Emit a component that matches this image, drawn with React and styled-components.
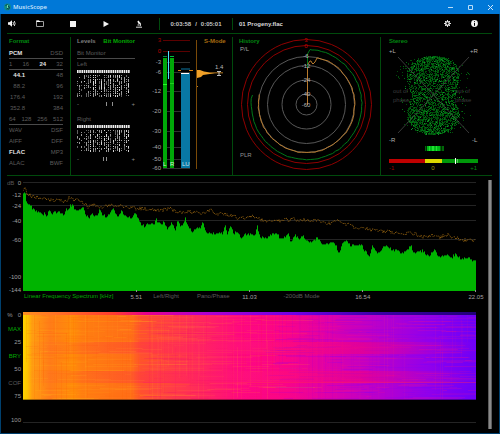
import React from "react";
import styled, { createGlobalStyle } from "styled-components";

const GlobalStyle = createGlobalStyle`
  * { box-sizing: border-box; }
  html, body { margin: 0; background: #000; }
  body { font: 6px/8px "Liberation Sans", Arial, sans-serif; color: #8a8a8a; }
  svg { display: block; }
  svg text { font-family: "Liberation Sans", Arial, sans-serif; font-size: 6px; }
`;

const GREEN = "#00a800";
const RULE = "#004a0c";

/* ---------- data ---------- */

function makeRandom(seed) {
  let s = seed;
  return () => {
    s = (s * 1664525 + 1013904223) % 4294967296;
    return s / 4294967296;
  };
}

function sampleAt(points, x) {
  for (let i = 1; i < points.length; i++) {
    if (x <= points[i][0]) {
      const [x0, y0] = points[i - 1];
      const [x1, y1] = points[i];
      return y0 + ((y1 - y0) * (x - x0)) / (x1 - x0);
    }
  }
  return points[points.length - 1][1];
}

const LEVEL = [
  [0, 60], [5, 52], [9, 85], [17, 90], [27, 103], [37, 110], [44, 118], [50, 112], [57, 122], [64, 118],
  [70, 128], [77, 112], [87, 118], [102, 115], [112, 118], [122, 122], [129, 108], [137, 108], [142, 93],
  [150, 98], [157, 112], [167, 108], [175, 102], [180, 103], [187, 122], [197, 133], [202, 122], [212, 125],
  [222, 125], [230, 105], [237, 122], [247, 130], [257, 122], [270, 106], [282, 130], [295, 113], [302, 125],
  [317, 130], [327, 130], [335, 116], [344, 135], [352, 150], [364, 158], [372, 148], [382, 150], [392, 152],
  [399, 136], [407, 150], [417, 150], [422, 143], [432, 165], [444, 146], [457, 168], [464, 138], [472, 160],
  [480, 150], [486, 132], [494, 158], [507, 175], [522, 165], [532, 160], [538, 146], [547, 175], [562, 178],
  [577, 182], [587, 175], [597, 180], [605, 153], [612, 180], [622, 158], [632, 182], [640, 172], [652, 192],
  [667, 182], [682, 183], [695, 182], [702, 158], [710, 192], [722, 190], [734, 192], [742, 182], [760, 178],
  [772, 195], [782, 192], [795, 177], [802, 210], [814, 182], [827, 195], [840, 190], [850, 200], [862, 205],
  [882, 192], [897, 212], [917, 208], [937, 212], [946, 238], [957, 212], [967, 200], [982, 215], [1012, 212],
  [1027, 235], [1039, 248], [1048, 214], [1062, 238], [1077, 225], [1089, 214], [1107, 230], [1117, 228],
  [1132, 240], [1147, 235], [1162, 213], [1170, 240], [1197, 232], [1217, 250], [1234, 223], [1244, 250],
  [1272, 245], [1282, 255], [1297, 240], [1312, 258], [1332, 250], [1347, 262], [1359, 258],
].map(([x, y]) => [x / 3, y / 3 - 2]);

const PEAK = [
  [0, 55], [5, 44], [14, 60], [32, 68], [52, 72], [77, 78], [102, 77], [127, 82], [143, 68], [154, 78],
  [177, 82], [194, 98], [207, 92], [222, 97], [252, 98], [272, 93], [307, 97], [332, 103], [362, 103],
  [380, 108], [397, 109], [417, 108], [442, 105], [462, 115], [492, 112], [532, 118], [564, 107], [582, 120],
  [622, 122], [647, 133], [682, 130], [697, 128], [717, 138], [742, 142], [772, 140], [812, 135], [852, 138],
  [882, 140], [922, 150], [944, 136], [962, 150], [982, 148], [1002, 168], [1022, 160], [1037, 165],
  [1057, 172], [1102, 172], [1132, 178], [1172, 178], [1207, 190], [1232, 182], [1252, 190], [1272, 182],
  [1302, 192], [1322, 200], [1342, 196], [1359, 202],
].map(([x, y]) => [x / 3, y / 3 - 2]);

const rnd = makeRandom(42);

let levelPath = "M0 115";
let levelEdge = "";
let peakPath = "";
for (let x = 0; x < 453; x++) {
  const y = Math.round(sampleAt(LEVEL, x) + (rnd() - 0.4) * 2.6);
  levelPath += `V${y}H${x + 1}`;
  levelEdge += `M${x} ${y - 1}h1v2h-1z`;
  const p = (sampleAt(PEAK, x) + (rnd() - 0.5) * 4).toFixed(1);
  peakPath += `${x ? "L" : "M"}${x} ${p}`;
}
levelPath += "V115Z";

function bitDots(seed) {
  const r = makeRandom(seed);
  const dots = ["", "", ""];
  for (let c = 0; c < 24; c++) {
    const density = c < 4 ? 0.4 : 0.6 + r() * 0.4;
    const tone = r();
    for (let row = 0; row < 11; row++) {
      if (r() < density) {
        const shade = Math.floor((tone * 0.6 + r() * 0.4) * 3);
        dots[shade] += `M${Math.round(c * 2.22)} ${5 + row * 2}h1v${r() < 0.5 ? 2 : 1}h-1z`;
      }
    }
  }
  return dots;
}

const stereoDots = (() => {
  const r = makeRandom(9);
  const dots = ["", "", ""];
  for (let i = 0; i < 4300; i++) {
    const y = 22 + r() * 78;
    const t = Math.abs(y - 61) / 39;
    const half = t > 0.5 ? 29 * Math.sqrt(Math.max(0, 1 - ((t - 0.5) / 0.51) ** 2)) : 24 + 10 * t;
    const u = r() * 2 - 1;
    const spread = r() < 0.9 ? u * 0.92 : u * 1.3;
    const keep = t < 0.35 ? 0.6 : 0.85;
    if (r() < keep) {
      dots[Math.floor(r() * r() * 2.7)] += `M${Math.round(54 + spread * half)} ${Math.round(y)}h1v1h-1z`;
    }
  }
  return dots;
})();

const streaks = (() => {
  const r = makeRandom(77);
  const list = [];
  for (let i = 0; i < 640; i++) {
    const w = 4 + r() * 60;
    const x = r() * 453;
    const tone = x < 120 ? ["#ffb818", "#ff6a10"] : x < 240 ? ["#ff6a40", "#f0106a"] : ["#ff1080", "#7a00ff"];
    list.push({ x: Math.min(x, 453 - w), y: 3 + Math.floor(r() * 84), w, h: 1, c: tone[r() < 0.5 ? 0 : 1], o: 0.06 + r() * 0.16 });
  }
  for (let i = 0; i < 170; i++) {
    const x = Math.floor(r() * 453);
    const top = r() < 0.5 ? 3 : 3 + Math.floor(r() * 50);
    const tone = x < 120 ? ["#ffb020", "#ff6000"] : x < 250 ? ["#ff8a30", "#ff1060"] : ["#ff3070", "#9a00e0"];
    const strength = x < 250 ? 0.16 : 0.07;
    list.push({ x, y: top, w: 1, h: Math.min(87 - top, 20 + r() * 80), c: tone[r() < 0.5 ? 0 : 1], o: 0.04 + r() * strength });
  }
  return list;
})();

function ringTrace(radius, start, end, wobble, seed) {
  const r = makeRandom(seed);
  let d = "";
  for (let a = start; a <= end; a += 4) {
    const rad = (a * Math.PI) / 180;
    const q = radius + (r() - 0.5) * wobble;
    d += `${d ? "L" : "M"}${(73.5 + q * Math.sin(rad)).toFixed(1)} ${(70.5 - q * Math.cos(rad)).toFixed(1)}`;
  }
  return d;
}

/* ---------- styled parts ---------- */

const Window = styled.div`
  display: flex;
  flex-direction: column;
  min-height: 100vh;
  background: #000;
  border: 1px solid #00406e;
  border-top: 0;
`;

const TitleBar = styled.header`
  display: flex;
  align-items: center;
  height: 14px;
  margin: 0 -1px;
  padding-left: 4px;
  background: #0078d7;
`;

const Title = styled.h1`
  flex: 1;
  margin: 0 0 0 2px;
  font: 600 6px/8px "Open Sans", "Noto Sans", sans-serif;
  color: #cfe6fb;
`;

const IconButton = styled.button`
  display: flex;
  align-items: center;
  justify-content: center;
  flex: none;
  width: ${(p) => p.$w}px;
  height: 14px;
  padding: 0;
  border: 0;
  background: none;
  color: ${(p) => p.$color || "#f4f4f4"};
`;

const Toolbar = styled.nav`
  display: flex;
  align-items: center;
  height: 19px;
  padding-right: 11px;
`;

const Times = styled.div`
  display: flex;
  justify-content: center;
  gap: 4px;
  width: 74px;
  margin-left: 4px;
  border: solid ${RULE};
  border-width: 0 1px;
  line-height: 12px;
  font-weight: 700;
  color: #c4c4c4;
`;

const Track = styled.div`
  flex: 1;
  padding-left: 6px;
  font-weight: 700;
  color: #d8d8d8;
`;

const Content = styled.main`
  display: flex;
  flex: 1;
  flex-direction: column;
  margin: 0 7px 0 6px;
  border-top: 1px solid ${RULE};
`;

const Panels = styled.div`
  display: grid;
  grid-template-columns: 64fr 162fr 148fr 111fr;
  height: 141px;
  padding: 3px 0;
`;

const Panel = styled.section`
  display: ${(p) => (p.$split ? "flex" : "block")};
  min-width: 0;
  border-right: ${(p) => (p.$last ? 0 : 1)}px solid ${RULE};
`;

const Overlay = styled.div`
  display: grid;
  > * { grid-area: 1 / 1; }
`;

const Heading = styled.h2`
  margin: 0;
  padding: 0 0 3px ${(p) => p.$indent}px;
  font: 700 6px/8px "Liberation Sans", Arial, sans-serif;
  color: #008a10;
`;

const FormatList = styled.div`
  margin: 0 7px 0 2px;
`;

const FormatRow = styled.div`
  display: flex;
  justify-content: space-between;
  height: 11px;
  line-height: 10px;
  border-bottom: ${(p) => (p.$rule ? "1px solid #4a4a4a" : "1px solid transparent")};
`;

const FormatItem = styled.span`
  min-width: ${(p) => (p.$rate ? 16 : 0)}px;
  text-align: right;
  color: ${(p) => (p.$on ? "#e0e0e0" : "#5c5c5c")};
  font-weight: ${(p) => (p.$on ? 700 : 400)};
`;

const LevelColumn = styled.div`
  display: flex;
  flex-direction: column;
  flex: none;
  width: 77px;
  padding: 0 13px 0 6px;
`;

const Tabs = styled.div`
  display: flex;
  justify-content: space-between;
  align-items: flex-start;
  height: 11px;
`;

const TextButton = styled.button`
  padding: 0;
  border: 0;
  background: none;
  font: ${(p) => (p.$bold ? 700 : 400)} 6px/8px "Liberation Sans", Arial, sans-serif;
  color: ${(p) => p.$color};
  white-space: nowrap;
`;

const Caption = styled.div`
  height: 11px;
  line-height: 10px;
  color: #5c5c5c;
  border-bottom: 1px solid ${(p) => (p.$rule ? "#4a4a4a" : "transparent")};
`;

const Channel = styled.div`
  height: 55px;
`;

const Balance = styled.div`
  display: flex;
  justify-content: space-between;
  align-items: center;
  margin-top: 2px;
`;

const SMode = styled.div`
  padding-left: 56px;
`;

const Analysis = styled.div`
  display: flex;
  flex: 1;
  justify-content: space-between;
  gap: 12px;
  border-top: 1px solid ${RULE};
`;

const Charts = styled.div`
  flex: 1;
  min-width: 0;
`;

const Scrollbar = styled.div`
  width: 4px;
  margin: 4px 0;
  background: #8a8a8a;
  border: solid #5c5c5c;
  border-width: 0 1px;
`;

const ChartRow = styled.section`
  display: grid;
  grid-template-columns: 16px 1fr;
`;

const FrequencyAxis = styled.div`
  display: grid;
  grid-template-columns: repeat(4, minmax(0, 1fr));
  grid-column: 2;
  height: 20px;
`;

const AxisCell = styled.div`
  display: flex;
  height: 8px;
  padding-left: ${(p) => p.$indent}px;
  button + button { margin-left: 18px; }
`;

const Tick = styled.span`
  flex: none;
  width: 20px;
  margin: 1px -10px 0 auto;
  text-align: center;
  color: #a0a0a0;
`;

const PercentAxis = styled.div`
  display: flex;
  flex-direction: column;
  justify-content: space-between;
  align-items: flex-end;
  height: 87px;
  padding-right: 2px;
`;

const PercentLabel = styled.span`
  display: flex;
  gap: 5px;
  line-height: 6px;
  color: #9a9a9a;
`;

const Footer = styled.div`
  display: flex;
  align-items: center;
  justify-content: flex-end;
  grid-column: 1;
  height: 8px;
  margin-top: 16px;
  padding-right: 2px;
  color: #9a9a9a;
`;

const FooterRule = styled.div`
  height: 1px;
  margin-top: 22px;
  background: #242424;
`;

/* ---------- drawings ---------- */

const Stretch = ({ w, h, label, children }) => (
  <svg width="100%" height={h} viewBox={`0 0 ${w} ${h}`} preserveAspectRatio="none" role="img" aria-label={label}>
    {children}
  </svg>
);

function BitGrid({ seed }) {
  const dots = bitDots(seed);
  return (
    <svg width="58" height="28" viewBox="0 0 58 28" role="img" aria-label="Bit activity">
      {Array.from({ length: 24 }, (_, i) => (
        <rect key={i} x={i * 2.22} y="0" width="1.600" height="3" fill="#f0f0f0" />
      ))}
      <path d={dots[0]} fill="#606060" />
      <path d={dots[1]} fill="#989898" />
      <path d={dots[2]} fill="#d4d4d4" />
    </svg>
  );
}

function BitChannel({ name, seed, marks }) {
  return (
    <Channel>
      <Caption>{name}</Caption>
      <BitGrid seed={seed} />
      <Balance>
        <span>-</span>
        <svg width="50" height="6" viewBox="0 0 50 6" aria-hidden="true">
          {marks.map((x) => (
            <rect key={x} x={x} y="1" width="1" height="4" fill="#909090" />
          ))}
        </svg>
        <span>+</span>
      </Balance>
    </Channel>
  );
}

function Meters() {
  const marks = [["3", 6, "#a00000"], ["0", 17, "#c00000"], ["-3", 28], ["-6", 38], ["-12", 57], ["-20", 77], ["-30", 97], ["-40", 113], ["-50", 125], ["-60", 134]];
  return (
    <svg width="84" height="138" viewBox="0 3 84 138" role="img" aria-label="Level meters">
      {marks.map(([t, y, c]) => (
        <g key={t}>
          <text x="13" y={y + 2} textAnchor="end" fill={c || "#a8a8a8"}>{t}</text>
          <rect x="15" y={y} width="27" height="1" fill={c ? "#5c0000" : "#303030"} />
        </g>
      ))}
      <rect x="15" y="24" width="4" height="110" fill="#00a808" />
      <rect x="22" y="24" width="4" height="110" fill="#00a808" />
      <rect x="15" y="22" width="4" height="1" fill="#008a40" />
      <rect x="22" y="22" width="4" height="1" fill="#00c040" />
      <rect x="15" y="50" width="4" height="1" fill="#20ff20" />
      <rect x="22" y="49" width="4" height="1" fill="#20d020" />
      <rect x="20" y="17" width="1" height="28" fill="#50e0ff" />
      <rect x="33" y="34" width="9" height="2" fill="#063c52" />
      <path d="M30 36h3v1h-3zM41 36h4v1h-4z" fill="#d88010" />
      <rect x="33" y="39" width="9" height="95" fill="#0878a4" />
      <rect x="33" y="39" width="8" height="1" fill="#fff" />
      <text x="15" y="132" fill="#d8ead8">L</text>
      <text x="22" y="132" fill="#d8ead8">R</text>
      <text x="34" y="132" fill="#d0e4ec">LU</text>
      <rect x="48" y="6" width="1" height="129" fill="#7a4a08" />
      <path d="M49 36h3l4 1.500 6 1H75v.8H67l-7 1-5 .8-2 2-4 .9z" fill="#f0a028" />
      <rect x="49" y="52" width="1" height="1" fill="#c07818" />
      <path d="M69 37.500h4M71 38v4M69 41.500h4" stroke="#c0c0c0" strokeWidth="1" />
      <text x="67" y="35" fill="#b8b8b8">1.4</text>
    </svg>
  );
}

function HistoryPlot() {
  const labels = [["3", 6, "#c00000"], ["0", 12, "#c00000"], ["-6", 22], ["-12", 32], ["-24", 46], ["-40", 60], ["-60", 71]];
  return (
    <svg width="146" height="138" viewBox="0 3 146 138" role="img" aria-label="Level history">
      <g fill="none" strokeWidth="1">
        <circle cx="73.500" cy="70.500" r="65" stroke="#900000" />
        <circle cx="73.500" cy="70.500" r="59" stroke="#900000" />
        <circle cx="73.500" cy="70.500" r="48" stroke="#585858" />
        <circle cx="73.500" cy="70.500" r="39" stroke="#585858" />
        <circle cx="73.500" cy="70.500" r="24.500" stroke="#585858" />
        <circle cx="73.500" cy="70.500" r="10.500" stroke="#585858" />
        <path d={`M74.500 53V20L77 15.500 L79 16${ringTrace(55.2, 8, 280, 0.8, 5).replace("M", "L")}`} stroke="#007818" />
        <path d={`M74.500 71V34M75 30l2-3 1 0 1 2 1 1 2-2 2-4${ringTrace(48.2, 14, 282, 0.9, 8).replace("M", "L")}`} stroke="#b87a2c" />
      </g>
      {labels.map(([t, y, c]) => (
        <text key={t} x="73" y={y + 2} textAnchor="middle" fill={c || "#b8b8b8"}>{t}</text>
      ))}
      <text x="7" y="17" fill="#a0a0a0">P/L</text>
      <text x="7" y="123" fill="#909090">PLR</text>
    </svg>
  );
}

function StereoPlot() {
  return (
    <svg width="108" height="138" viewBox="2 3 108 138" role="img" aria-label="Stereo field">
      <path d={stereoDots[0]} fill="#004c0a" />
      <path d={stereoDots[1]} fill="#006e12" />
      <path d={stereoDots[2]} fill="#109428" />
      <path d="M19 23L90 99M90 23L19 99" stroke="#484848" strokeWidth="1" opacity="0.8" />
      <g fill="#3c3c3c">
        <text x="14" y="59">out of</text>
        <text x="14" y="68">phase</text>
        <text x="76" y="59">out of</text>
        <text x="76" y="68">phase</text>
      </g>
      <g fill="#b0b0b0">
        <text x="10" y="19">+L</text>
        <text x="91" y="19">+R</text>
        <text x="10" y="108">-R</text>
        <text x="93" y="108">-L</text>
      </g>
      <rect x="46" y="112" width="19" height="5" fill="#006808" />
      <rect x="48" y="112" width="13" height="5" fill="#00b818" />
      <path d="M50 112h1v5h-1zM53 112h2v5h-2zM57 112h1v5h-1z" fill="#20e030" />
      <path d="M47 112h1v5h-1zM62 112h1v5h-1z" fill="#002c04" />
      <rect x="10" y="125" width="36" height="4" fill="#c00000" />
      <rect x="46" y="125" width="17" height="4" fill="#dcd800" />
      <rect x="63" y="125" width="36" height="4" fill="#00980a" />
      <rect x="78" y="125" width="1" height="4" fill="#60c860" />
      <rect x="76" y="124" width="1" height="6" fill="#fff" />
      <text x="10" y="136" fill="#a00000">-1</text>
      <text x="54" y="136" textAnchor="middle" fill="#a09c00">0</text>
      <text x="98" y="136" textAnchor="end" fill="#008a10">+1</text>
    </svg>
  );
}

const DB_MARKS = [["0", 6], ["-12", 18], ["-24", 29], ["-40", 44], ["-60", 63], ["-100", 100], ["-144", 113]];

function SpectrumAxis() {
  return (
    <svg width="16" height="116" viewBox="0 0 16 116" role="img" aria-label="Decibel scale">
      <text x="0" y="9" fill="#585858">dB</text>
      {DB_MARKS.map(([t, y]) => (
        <text key={t} x="14" y={y + 3} textAnchor="end" fill="#a0a0a0">{t}</text>
      ))}
    </svg>
  );
}

function SpectrumPlot() {
  return (
    <Stretch w={453} h={116} label="Linear frequency spectrum">
      {DB_MARKS.map(([t, y]) => (
        <rect key={t} x="0" y={y} width="453" height="1" fill="#242424" />
      ))}
      <path d={peakPath} fill="none" stroke="#966410" strokeWidth="1" strokeDasharray="1 1" />
      <path d={levelEdge} fill="#006c08" />
      <path d={levelPath} fill="#00b400" shapeRendering="crispEdges" />
      {[113, 226, 339, 452].map((x) => (
        <rect key={x} x={x} y="114" width="1" height="2" fill="#909090" />
      ))}
    </Stretch>
  );
}

function Spectrogram() {
  const stops = [["0", "#ffd400"], [".01", "#ffc400"], [".02", "#ff9c10"], [".06", "#ff7c18"], [".11", "#ff8c08"], [".13", "#ff7e10"], [".24", "#ff6e18"], [".26", "#ff5030"], [".36", "#ff3450"], [".48", "#ff0880"], [".58", "#fa0488"], [".68", "#dc00ac"], [".8", "#b400d0"], [".9", "#9000ec"], ["1", "#6c00f8"]];
  return (
    <Stretch w={453} h={88} label="Spectrogram">
      <defs>
        <linearGradient id="heat">
          {stops.map(([o, c]) => <stop key={o} offset={o} stopColor={c} />)}
        </linearGradient>
        <linearGradient id="onset">
          <stop offset="0" stopColor="#ff9020" />
          <stop offset=".2" stopColor="#ff3c30" />
          <stop offset=".27" stopColor="#e8008c" />
          <stop offset=".4" stopColor="#b000d0" />
          <stop offset=".6" stopColor="#7000e8" />
          <stop offset=".78" stopColor="#3c00a8" />
          <stop offset="1" stopColor="#200078" />
        </linearGradient>
        <linearGradient id="band">
          <stop offset="0" stopColor="#ff2050" stopOpacity="0" />
          <stop offset=".2" stopColor="#ff1458" stopOpacity=".2" />
          <stop offset=".5" stopColor="#ff1878" stopOpacity=".4" />
          <stop offset=".75" stopColor="#ff0070" stopOpacity=".45" />
          <stop offset="1" stopColor="#ff0090" stopOpacity="0" />
        </linearGradient>
      </defs>
      <rect width="453" height="88" fill="url(#heat)" />
      {streaks.map((s, i) => (
        <rect key={i} x={s.x} y={s.y} width={s.w} height={s.h} fill={s.c} opacity={s.o} />
      ))}
      <rect y="30" width="453" height="12" fill="url(#band)" />
      <rect y="59" width="453" height="12" fill="url(#band)" />
      <rect y="70" x="120" width="333" height="1" fill="#ff2060" opacity=".4" />
      <rect width="453" height="3" fill="url(#onset)" />
      <rect y="87" width="453" height="1" fill="#000" opacity=".35" />
    </Stretch>
  );
}

/* ---------- page ---------- */

const FORMAT_ROWS = [
  { items: ["PCM", "DSD"], on: "PCM", rule: true },
  { items: ["1", "16", "24", "32"], on: "24", rule: true },
  { items: ["44.1", "48"], on: "44.1", rate: true },
  { items: ["88.2", "96"], rate: true },
  { items: ["176.4", "192"], rate: true },
  { items: ["352.8", "384"], rate: true },
  { items: ["64", "128", "256", "512"], rule: true },
  { items: ["WAV", "DSF"] },
  { items: ["AIFF", "DFF"] },
  { items: ["FLAC", "MP3"], on: "FLAC" },
  { items: ["ALAC", "BWF"] },
];

export default function App() {
  return (
    <Window>
      <GlobalStyle />
      <TitleBar>
        <svg width="7" height="8" viewBox="0 0 7 8" aria-hidden="true">
          <circle cx="3.500" cy="4" r="3.400" fill="#108c88" />
          <path d="M1.500 3l1.500-1.500 1 2-1 3M4 2.500l1.500 2-1 2" fill="none" stroke="#0a3c44" strokeWidth="1" />
          <path d="M3.500 2v3" stroke="#70d8a8" strokeWidth="1" />
        </svg>
        <Title>MusicScope</Title>
        <IconButton $w={20} $color="#b8dcf8" aria-label="Minimize">
          <svg width="5" height="5" viewBox="0 0 5 5"><path d="M0 2.500h5" stroke="currentColor" /></svg>
        </IconButton>
        <IconButton $w={20} $color="#b8dcf8" aria-label="Maximize">
          <svg width="5" height="5" viewBox="0 0 5 5"><path d="M.5.5h4v4h-4z" fill="none" stroke="currentColor" /></svg>
        </IconButton>
        <IconButton $w={20} $color="#d0e8fc" aria-label="Close">
          <svg width="5" height="5" viewBox="0 0 5 5"><path d="M0 0l5 5M5 0L0 5" stroke="currentColor" /></svg>
        </IconButton>
      </TitleBar>

      <Toolbar>
        <IconButton $w={22} aria-label="Volume">
          <svg width="8" height="7" viewBox="0 0 8 7">
            <path d="M0 2.200h1.500L4 .2v6.600L1.500 4.800H0z" fill="currentColor" />
            <path d="M5 2q1 1.500 0 3M6.300 1q1.600 2.500 0 5" fill="none" stroke="currentColor" strokeWidth=".9" />
          </svg>
        </IconButton>
        <IconButton $w={33} aria-label="Open">
          <svg width="8" height="7" viewBox="0 0 8 7">
            <path d="M.5 6.500v-6h2.500l1 1h3.500v5z" fill="none" stroke="#a0a0a0" />
            <path d="M.5 1.500h3.500" stroke="#fff" />
          </svg>
        </IconButton>
        <IconButton $w={33} aria-label="Stop">
          <svg width="6" height="6" viewBox="0 0 6 6"><path d="M0 0h6v6H0z" fill="currentColor" /></svg>
        </IconButton>
        <IconButton $w={33} aria-label="Play">
          <svg width="6" height="6" viewBox="0 0 6 6"><path d="M.5 0L6 3 .5 6z" fill="currentColor" /></svg>
        </IconButton>
        <IconButton $w={33} aria-label="Analyze">
          <svg width="6" height="8" viewBox="0 0 6 8">
            <path d="M2 1l1.600 3" stroke="currentColor" strokeWidth="1.600" />
            <path d="M3.600 2.200q1.800 1.500.6 4M1.500 5h2M0 7.200h6" fill="none" stroke="currentColor" strokeWidth=".9" />
          </svg>
        </IconButton>
        <Times>
          <span>0:03:58</span>
          <span>/</span>
          <span>0:05:01</span>
        </Times>
        <Track>01 Progeny.flac</Track>
        <IconButton $w={27} aria-label="Settings">
          <svg width="7" height="7" viewBox="0 0 7 7">
            <circle cx="3.500" cy="3.500" r="1.800" fill="none" stroke="currentColor" strokeWidth="1.300" />
            <path d="M3.500 0v1.400M3.500 5.600V7M0 3.500h1.400M5.600 3.500H7M1 1l1 1M5 5l1 1M6 1L5 2M2 5L1 6" stroke="currentColor" strokeWidth=".9" />
          </svg>
        </IconButton>
        <IconButton $w={27} aria-label="Information">
          <svg width="7" height="7" viewBox="0 0 7 7">
            <circle cx="3.500" cy="3.500" r="3.400" fill="currentColor" />
            <path d="M3.500 1.200v1M3.500 3v2.800" stroke="#000" strokeWidth="1" />
          </svg>
        </IconButton>
      </Toolbar>

      <Content>
        <Panels>
          <Panel>
            <Heading $indent={2}>Format</Heading>
            <FormatList>
              {FORMAT_ROWS.map((row) => (
                <FormatRow key={row.items[0]} $rule={row.rule}>
                  {row.items.map((item) => (
                    <FormatItem key={item} $on={item === row.on} $rate={row.rate}>{item}</FormatItem>
                  ))}
                </FormatRow>
              ))}
            </FormatList>
          </Panel>

          <Panel $split>
            <LevelColumn>
              <Tabs>
                <TextButton $bold $color="#7c7c7c">Levels</TextButton>
                <TextButton $bold $color={GREEN}>Bit Monitor</TextButton>
              </Tabs>
              <Caption $rule>Bit Monitor</Caption>
              <BitChannel name="Left" seed={3} marks={[26, 32]} />
              <BitChannel name="Right" seed={21} marks={[23, 26]} />
            </LevelColumn>
            <Overlay>
              <Meters />
              <SMode>
                <TextButton $bold $color="#a86c10">S-Mode</TextButton>
              </SMode>
            </Overlay>
          </Panel>

          <Panel>
            <Overlay>
              <HistoryPlot />
              <Heading $indent={6}>History</Heading>
            </Overlay>
          </Panel>

          <Panel $last>
            <Overlay>
              <StereoPlot />
              <Heading $indent={8}>Stereo</Heading>
            </Overlay>
          </Panel>
        </Panels>

        <Analysis>
          <Charts>
            <ChartRow>
              <SpectrumAxis />
              <SpectrumPlot />
              <FrequencyAxis>
                <AxisCell $indent={1}>
                  <TextButton $color={GREEN}>Linear Frequency Spectrum [kHz]</TextButton>
                  <Tick>5.51</Tick>
                </AxisCell>
                <AxisCell $indent={17}>
                  <TextButton $color="#5c5c5c">Left/Right</TextButton>
                  <TextButton $color="#5c5c5c">Pano/Phase</TextButton>
                  <Tick>11.03</Tick>
                </AxisCell>
                <AxisCell $indent={34}>
                  <TextButton $color="#5c5c5c">-200dB Mode</TextButton>
                  <Tick>16.54</Tick>
                </AxisCell>
                <AxisCell $indent={0}>
                  <Tick>22.05</Tick>
                </AxisCell>
              </FrequencyAxis>
            </ChartRow>
            <ChartRow>
              <PercentAxis>
                <PercentLabel><span>%</span><span>0</span></PercentLabel>
                <TextButton $color={GREEN}>MAX</TextButton>
                <PercentLabel>25</PercentLabel>
                <TextButton $color={GREEN}>BRY</TextButton>
                <PercentLabel>50</PercentLabel>
                <TextButton $color="#5c5c5c">COF</TextButton>
                <PercentLabel>75</PercentLabel>
              </PercentAxis>
              <Spectrogram />
              <Footer>100</Footer>
              <FooterRule />
            </ChartRow>
          </Charts>
          <Scrollbar />
        </Analysis>
      </Content>
    </Window>
  );
}
